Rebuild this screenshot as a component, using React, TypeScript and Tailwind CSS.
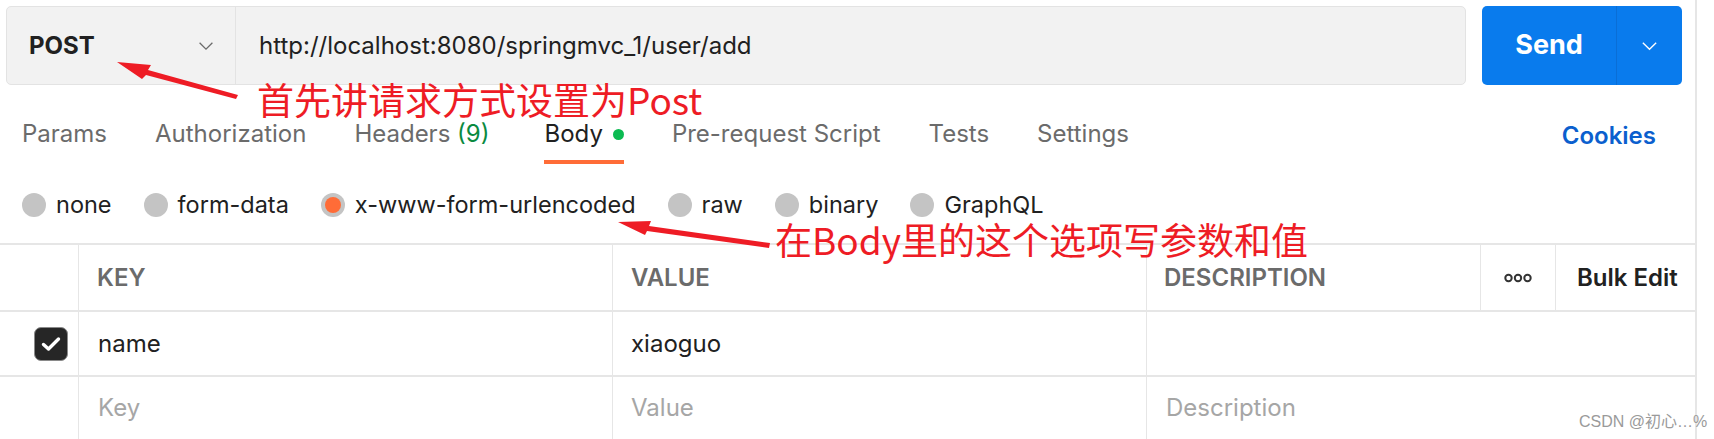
import React from "react";

const font = { fontFamily: "Inter, 'Noto Sans', sans-serif" };

function Chevron({ className }: { className?: string }) {
  return (
    <svg viewBox="0 0 20 12" className={className} fill="none">
      <polyline points="2,2 10,10 18,2" stroke="currentColor" strokeWidth="1.6" />
    </svg>
  );
}

function Radio({ label, checked }: { label: string; checked?: boolean }) {
  return (
    <div className="flex items-center gap-[10px]">
      <span className="w-[24px] h-[24px] rounded-full bg-[#c4c4c4] flex items-center justify-center">
        {checked && <span className="w-[16px] h-[16px] rounded-full bg-[#ff6c37]" />}
      </span>
      <span className="text-[23.5px] text-[#212121]">{label}</span>
    </div>
  );
}

function Annotations() {
  return (
    <>
      <svg className="absolute left-0 top-0 pointer-events-none" width="1714" height="439">
        <polygon points="117,62 151,65 148,70 238,95 236,99 146,75 142,79" fill="#ee1c25" />
        <polygon points="618,222 651,221 649,226 770,243 769,248 647,231 645,235" fill="#ee1c25" />
      </svg>
      <div
        className="absolute left-[257px] top-[75px] text-[37px] leading-[48px] text-[#ee1c25] whitespace-nowrap"
        style={{ fontFamily: "'Noto Sans CJK SC', sans-serif" }}
      >
        首先讲请求方式设置为Post
      </div>
      <div
        className="absolute left-[775px] top-[215px] text-[37px] leading-[48px] text-[#ee1c25] whitespace-nowrap"
        style={{ fontFamily: "'Noto Sans CJK SC', sans-serif" }}
      >
        在Body里的这个选项写参数和值
      </div>
      <div
        className="absolute left-[1579px] top-[410px] text-[16px] leading-[24px] text-[#9a9a9a] whitespace-nowrap"
        style={{ fontFamily: "'Liberation Sans', 'Noto Sans CJK SC', sans-serif" }}
      >
        CSDN @初心…%
      </div>
    </>
  );
}

export default function App() {
  const tabs = [
    { label: "Params" },
    { label: "Authorization" },
    { label: "Headers", count: "(9)" },
    { label: "Body", active: true },
    { label: "Pre-request Script" },
    { label: "Tests" },
    { label: "Settings" },
  ];

  return (
    <div className="relative w-[1714px] h-[439px] bg-white overflow-hidden flex" style={font}>
      <div className="w-[1697px] border-r-2 border-[#e6e6e6] flex flex-col">
        {/* request bar */}
        <div className="flex pl-[6px] pt-[6px]">
          <div className="w-[1460px] h-[79px] rounded-[5px] border border-[#e3e3e3] bg-[#f2f2f2] flex">
            <div className="w-[229px] border-r border-[#e3e3e3] flex items-center justify-between pl-[22px] pr-[21px]">
              <span className="text-[24px] font-bold text-[#212121]">POST</span>
              <Chevron className="w-[16px] h-[10px] text-[#6b6b6b]" />
            </div>
            <div className="flex items-center pl-[23px] text-[24px] text-[#212121]">
              http://localhost:8080/springmvc_1/user/add
            </div>
          </div>
          <div className="ml-[16px] w-[200px] h-[79px] rounded-[5px] bg-[#097bed] flex text-white">
            <div className="w-[135px] flex items-center justify-center text-[27px] font-bold border-r border-[#0a6ed6]">
              Send
            </div>
            <div className="flex-1 flex items-center justify-center">
              <Chevron className="w-[17px] h-[10px] text-white" />
            </div>
          </div>
        </div>

        {/* tabs */}
        <div className="flex items-stretch h-[66px] mt-[15px] pl-[22px] pr-[39px]">
          <div className="flex gap-[48px]">
            {tabs.map((t) => (
              <div
                key={t.label}
                className={`flex items-center gap-[10px] pt-[8px] border-b-4 text-[24px] ${
                  t.active ? "ml-[7px] border-[#ff6c37] text-[#212121]" : "border-transparent text-[#6b6b6b]"
                }`}
              >
                <span>
                  {t.label}
                  {t.count && <span className="text-[#0a8a3f]"> {t.count}</span>}
                </span>
                {t.active && <span className="w-[11px] h-[11px] rounded-full bg-[#0cbb52]" />}
              </div>
            ))}
          </div>
          <div className="ml-auto flex items-center pt-[8px] text-[24px] font-semibold text-[#0b5fce]">Cookies</div>
        </div>

        {/* body types */}
        <div className="flex items-center h-[81px] pt-[2px] pl-[22px] gap-[32px]">
          <Radio label="none" />
          <Radio label="form-data" />
          <Radio label="x-www-form-urlencoded" checked />
          <Radio label="raw" />
          <Radio label="binary" />
          <Radio label="GraphQL" />
        </div>

        {/* table */}
        <div className="border-t-2 border-[#e6e6e6] text-[24px]">
          <div className="flex h-[67px] border-b-2 border-[#e6e6e6]">
            <div className="w-[79px] border-r border-[#e6e6e6]" />
            <div className="w-[534px] border-r border-[#e6e6e6] flex items-center pl-[18px] font-semibold text-[#6b6b6b]">KEY</div>
            <div className="w-[534px] border-r border-[#e6e6e6] flex items-center pl-[18px] font-semibold text-[#6b6b6b]">VALUE</div>
            <div className="w-[334px] border-r border-[#e6e6e6] flex items-center pl-[17px] font-semibold text-[#6b6b6b]">DESCRIPTION</div>
            <div className="w-[75px] border-r border-[#e6e6e6] flex items-center justify-center">
              <svg width="28" height="10" viewBox="0 0 28 10" fill="none" stroke="#333" strokeWidth="2">
                <circle cx="4.5" cy="5" r="3.2" />
                <circle cx="14" cy="5" r="3.2" />
                <circle cx="23.5" cy="5" r="3.2" />
              </svg>
            </div>
            <div className="flex-1 flex items-center pl-[21px] font-semibold text-[#212121]">Bulk Edit</div>
          </div>
          <div className="flex h-[65px] border-b-2 border-[#e6e6e6]">
            <div className="w-[79px] border-r border-[#e6e6e6] flex items-center justify-end pr-[10px]">
              <span className="w-[34px] h-[34px] rounded-[7px] bg-[#262626] border border-[#8a8a8a] flex items-center justify-center">
                <svg width="20" height="16" viewBox="0 0 20 16" fill="none">
                  <polyline points="2.5,8.5 7.5,13 17.5,3" stroke="white" strokeWidth="3.4" strokeLinecap="round" strokeLinejoin="round" />
                </svg>
              </span>
            </div>
            <div className="w-[534px] border-r border-[#e6e6e6] flex items-center pl-[19px] text-[#212121]">name</div>
            <div className="w-[534px] border-r border-[#e6e6e6] flex items-center pl-[18px] text-[#212121]">xiaoguo</div>
            <div className="flex-1" />
          </div>
          <div className="flex h-[62px]">
            <div className="w-[79px] border-r border-[#e6e6e6]" />
            <div className="w-[534px] border-r border-[#e6e6e6] flex items-center pl-[19px] text-[#a6a6a6]">Key</div>
            <div className="w-[534px] border-r border-[#e6e6e6] flex items-center pl-[18px] text-[#a6a6a6]">Value</div>
            <div className="flex-1 flex items-center pl-[19px] text-[#a6a6a6]">Description</div>
          </div>
        </div>
      </div>
      <Annotations />
    </div>
  );
}
